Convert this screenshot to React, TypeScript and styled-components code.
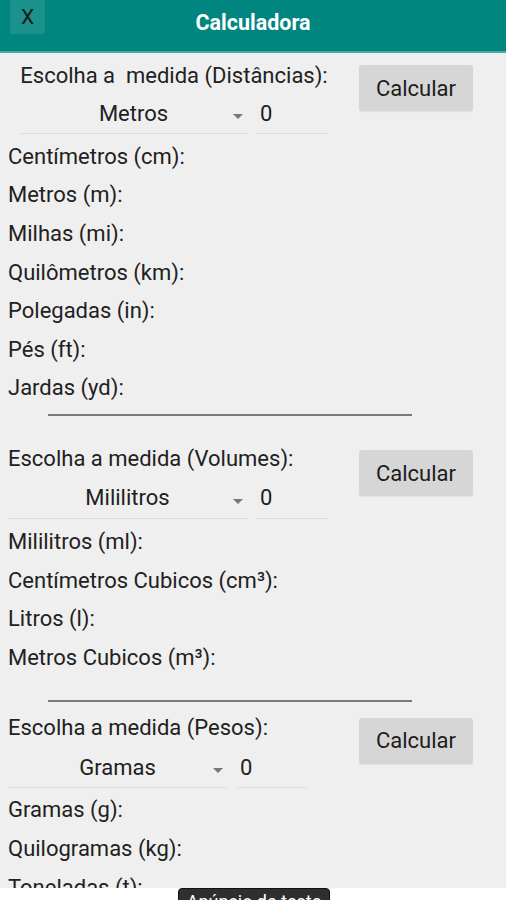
import React from "react";
import styled, { createGlobalStyle } from "styled-components";

const Global = createGlobalStyle`
  html, body { margin: 0; padding: 0; background: #efefef; }
  body { font-family: Roboto, "Noto Sans", Arial, sans-serif; color: #212121; overflow: hidden; }
  * { box-sizing: border-box; }
`;

const Page = styled.div`
  width: 506px;
  height: 900px;
  overflow: hidden;
  position: relative;
  background: #efefef;
`;

const Header = styled.header`
  height: 53px;
  background: #00857f;
  border-bottom: 2px solid #4aa9a4;
  display: grid;
  grid-template-columns: 1fr auto 1fr;
  align-items: start;
`;

const CloseBtn = styled.div`
  margin-left: 10px;
  width: 35px;
  height: 34px;
  background: #1b918b;
  border-radius: 2px;
  display: flex;
  align-items: center;
  justify-content: center;
  font-size: 21px;
  color: #1a1a1a;
`;

const Title = styled.div`
  padding-top: 10px;
  font-size: 21.5px;
  font-weight: 700;
  color: #ffffff;
  line-height: 26px;
`;

const Section = styled.section<{ $top: number }>`
  display: flex;
  align-items: flex-start;
  padding-top: ${(p) => p.$top}px;
`;

const LeftCol = styled.div<{ $width: number }>`
  width: ${(p) => p.$width}px;
  margin-left: 8px;
  display: flex;
  flex-direction: column;
`;

const Heading = styled.div<{ $center?: boolean }>`
  font-size: 22px;
  line-height: 24px;
  height: 24px;
  text-align: ${(p) => (p.$center ? "center" : "left")};
  white-space: pre;
`;

const PickRow = styled.div<{ $indent: number; $height: number }>`
  display: flex;
  padding-left: ${(p) => p.$indent}px;
  height: ${(p) => p.$height}px;
  gap: 10px;
`;

const Spinner = styled.div<{ $width: number; $pad: number }>`
  position: relative;
  width: ${(p) => p.$width}px;
  height: 100%;
  border-bottom: 1px solid #dcdcdc;
  padding-top: ${(p) => p.$pad}px;
  font-size: 22px;
  line-height: 24px;
  text-align: center;
`;

const Arrow = styled.span`
  position: absolute;
  right: 4px;
  bottom: 14px;
  width: 0;
  height: 0;
  border-left: 5px solid transparent;
  border-right: 5px solid transparent;
  border-top: 5px solid #777;
`;

const NumInput = styled.div<{ $pad: number }>`
  width: 70px;
  height: 100%;
  border-bottom: 1px solid #dcdcdc;
  padding-top: ${(p) => p.$pad}px;
  padding-left: 3px;
  font-size: 22px;
  line-height: 24px;
`;

const CalcButton = styled.button<{ $left: number; $top: number }>`
  margin-left: ${(p) => p.$left}px;
  margin-top: ${(p) => p.$top}px;
  width: 114px;
  height: 46px;
  border: none;
  border-radius: 3px;
  background: #d6d6d6;
  box-shadow: 0 1px 1px rgba(0, 0, 0, 0.06);
  font-family: Roboto, Arial, sans-serif;
  font-size: 22px;
  color: #1c1c1c;
  padding: 0;
`;

const Results = styled.div`
  display: flex;
  flex-direction: column;
  padding-left: 8px;
  padding-top: 3px;
`;

const ResultRow = styled.div`
  height: 38.6px;
  display: flex;
  align-items: center;
  font-size: 22px;
`;

const Divider = styled.hr<{ $top: number }>`
  margin: ${(p) => p.$top}px 0 0 48px;
  width: 364px;
  height: 2px;
  border: none;
  background: #7a7a7a;
`;

const AdBar = styled.div`
  position: absolute;
  left: 0;
  right: 0;
  bottom: 0;
  height: 12px;
  background: #ffffff;
  display: flex;
  justify-content: center;
`;

const AdBadge = styled.div`
  margin-left: 2px;
  width: 152px;
  height: 26px;
  background: #2f2f2f;
  border: 1px solid #111;
  border-radius: 4px;
  color: #fff;
  font-size: 18px;
  line-height: 22px;
  text-align: center;
  padding-top: 2px;
  white-space: nowrap;
`;

type Block = {
  heading: string;
  centerHeading?: boolean;
  indent: number;
  spinnerWidth: number;
  pickHeight: number;
  pickPad: number;
  unit: string;
  top: number;
  btnTop: number;
  rows: string[];
};

const blocks: Block[] = [
  {
    heading: "Escolha a  medida (Distâncias):",
    centerHeading: true,
    indent: 12,
    spinnerWidth: 227,
    pickHeight: 46,
    pickPad: 14,
    unit: "Metros",
    top: 11,
    btnTop: 1,
    rows: [
      "Centímetros (cm):",
      "Metros (m):",
      "Milhas (mi):",
      "Quilômetros (km):",
      "Polegadas (in):",
      "Pés (ft):",
      "Jardas (yd):",
    ],
  },
  {
    heading: "Escolha a medida (Volumes):",
    indent: 0,
    spinnerWidth: 239,
    pickHeight: 48,
    pickPad: 15,
    unit: "Mililitros",
    top: 31,
    btnTop: 3,
    rows: [
      "Mililitros (ml):",
      "Centímetros Cubicos (cm³):",
      "Litros (l):",
      "Metros Cubicos (m³):",
    ],
  },
  {
    heading: "Escolha a medida (Pesos):",
    indent: 0,
    spinnerWidth: 219,
    pickHeight: 48,
    pickPad: 16,
    unit: "Gramas",
    top: 14,
    btnTop: 2,
    rows: ["Gramas (g):", "Quilogramas (kg):", "Toneladas (t):"],
  },
];

const dividerTops = [7, 23];

export default function App() {
  return (
    <Page>
      <Global />
      <Header>
        <CloseBtn>X</CloseBtn>
        <Title>Calculadora</Title>
        <span />
      </Header>
      {blocks.map((b, i) => (
        <React.Fragment key={b.unit}>
          <Section $top={b.top}>
            <LeftCol $width={332}>
              <Heading $center={b.centerHeading}>{b.heading}</Heading>
              <PickRow $indent={b.indent} $height={b.pickHeight}>
                <Spinner $width={b.spinnerWidth} $pad={b.pickPad}>
                  {b.unit}
                  <Arrow />
                </Spinner>
                <NumInput $pad={b.pickPad}>0</NumInput>
              </PickRow>
            </LeftCol>
            <CalcButton $left={19} $top={b.btnTop}>
              Calcular
            </CalcButton>
          </Section>
          <Results>
            {b.rows.map((r) => (
              <ResultRow key={r}>{r}</ResultRow>
            ))}
          </Results>
          {i < dividerTops.length && <Divider $top={dividerTops[i]} />}
        </React.Fragment>
      ))}
      <AdBar>
        <AdBadge>Anúncio de teste</AdBadge>
      </AdBar>
    </Page>
  );
}
